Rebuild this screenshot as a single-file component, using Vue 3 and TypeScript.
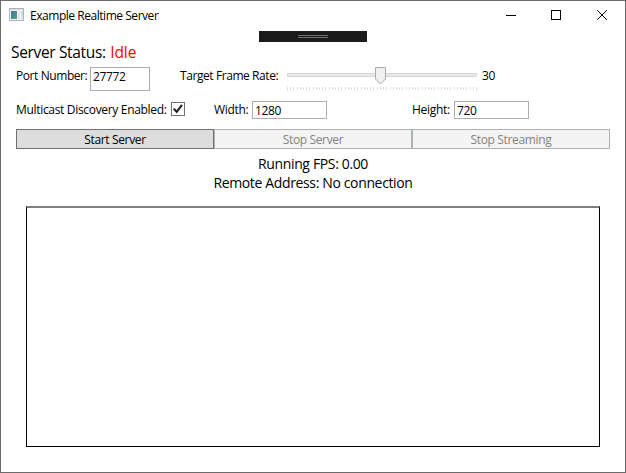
<script setup lang="ts">
import { ref } from 'vue'

const port = ref('27772')
const frameRate = ref(30)
const multicast = ref(true)
const width = ref('1280')
const height = ref('720')
const tickXs = Array.from({ length: 60 }, (_, i) => Math.round((i * 189) / 59))
</script>

<template>
  <div class="window">
    <header class="titlebar">
      <svg class="app-icon" width="16" height="14" viewBox="0 0 16 14" shape-rendering="crispEdges">
        <defs>
          <linearGradient id="pane" x1="0" y1="0" x2="1" y2="1">
            <stop offset="0" stop-color="#3b72a8" />
            <stop offset="1" stop-color="#50a878" />
          </linearGradient>
        </defs>
        <rect x="0.5" y="0.5" width="14" height="12" fill="#f3f4f5" stroke="#aeb2b9" />
        <rect x="1" y="1" width="13" height="1" fill="#d5d8dc" />
        <rect x="2" y="3" width="6" height="8" fill="url(#pane)" />
        <rect x="9" y="3" width="2" height="8" fill="#dfe3ee" />
        <rect x="12" y="3" width="2" height="4" fill="#c5dcd0" />
        <rect x="12" y="7" width="2" height="4" fill="#dde2e6" />
      </svg>
      <span class="title">Example Realtime Server</span>
      <div class="controls">
        <svg width="46" height="30" viewBox="0 0 46 30"><path d="M19 14.5h10" stroke="#000" /></svg>
        <svg width="46" height="30" viewBox="0 0 46 30"><rect x="18.5" y="9.5" width="9" height="9" fill="none" stroke="#000" /></svg>
        <svg width="46" height="30" viewBox="0 0 46 30"><path d="M18.2 9.2l9.6 9.6M27.8 9.2l-9.6 9.6" stroke="#000" /></svg>
      </div>
    </header>
    <div class="debug-bar"><i></i></div>

    <div class="status"><span>Server Status:</span><span class="idle">Idle</span></div>

    <div class="row first">
      <label class="port-label">Port Number:</label>
      <div class="box port">{{ port }}</div>
      <label class="rate-label">Target Frame Rate:</label>
      <svg class="slider" width="191" height="26" viewBox="0 0 191 26">
        <rect x="0.5" y="7.5" width="189" height="3" fill="#e7eaea" stroke="#d6d6d6" />
        <rect
          v-for="(x, i) in tickXs"
          :key="i"
          :x="x"
          y="21"
          width="1"
          :height="i === 0 || i === 59 ? 4 : 3"
          fill="#dedede"
        />
        <path d="M88.5 1.5h10v11.5l-5 5l-5 -5z" fill="#f0f0f0" stroke="#acacac" />
      </svg>
      <span class="rate">{{ frameRate }}</span>
    </div>

    <div class="row second">
      <div class="cell">
        <label class="multi-label">Multicast Discovery Enabled:</label>
        <svg class="check" width="14" height="14" viewBox="0 0 14 14">
          <rect x="0.5" y="0.5" width="13" height="13" fill="#fff" stroke="#707070" />
          <path v-if="multicast" d="M2.7 6.6l3 3.2L11 2.8" fill="none" stroke="#212121" stroke-width="2.1" />
        </svg>
      </div>
      <div class="cell">
        <label class="width-label">Width:</label>
        <div class="box dim">{{ width }}</div>
      </div>
      <div class="cell">
        <label class="height-label">Height:</label>
        <div class="box dim">{{ height }}</div>
      </div>
    </div>

    <div class="buttons">
      <button class="start"><span>Start Server</span></button>
      <button disabled><span>Stop Server</span></button>
      <button disabled class="stream"><span>Stop Streaming</span></button>
    </div>

    <div class="info fps"><span>Running FPS: 0.00</span></div>
    <div class="info remote"><span>Remote Address: No connection</span></div>

    <div class="preview"></div>
  </div>
</template>

<style>
body {
  margin: 0;
  overflow: hidden;
}
</style>

<style scoped>
.window {
  position: relative;
  box-sizing: border-box;
  width: 626px;
  height: 473px;
  border: 1px solid #6b6b6b;
  background: #fff;
  color: #000;
  font-family: "Open Sans", "Noto Sans", sans-serif;
  font-size: 12px;
  line-height: 16px;
  white-space: nowrap;
}
.titlebar {
  display: flex;
  align-items: center;
  height: 30px;
  padding-left: 8px;
}
.app-icon {
  margin-top: -2px;
}
.title {
  margin-left: 5px;
  letter-spacing: -0.46px;
}
.controls {
  display: flex;
  margin-left: auto;
}
.controls svg {
  display: block;
}
.debug-bar {
  position: absolute;
  top: 30px;
  left: 258px;
  width: 108px;
  height: 11px;
  display: flex;
  align-items: center;
  justify-content: center;
  background: #1b1b1b;
}
.debug-bar i {
  width: 30px;
  height: 1px;
  border: solid #6e6e6e;
  border-width: 1px 0;
}
.status {
  display: flex;
  height: 22px;
  margin-top: 10px;
  padding-left: 10px;
  font-size: 15.5px;
  line-height: 22px;
  letter-spacing: -0.34px;
}
.idle {
  margin-left: 4.5px;
  color: #f00;
  letter-spacing: -0.1px;
}
.row {
  display: flex;
  padding-left: 15px;
}
.first {
  height: 34px;
  padding-top: 3px;
}
label {
  flex: none;
  padding-top: 2px;
  letter-spacing: -0.42px;
}
.port-label {
  width: 74px;
}
.rate-label {
  width: 107px;
  margin-left: 30px;
}
.box {
  box-sizing: border-box;
  flex: none;
  border: 1px solid #abadb3;
  padding-left: 2px;
  letter-spacing: -0.35px;
}
.port {
  width: 60px;
  height: 24px;
  margin-top: 1px;
  padding-top: 1px;
}
.slider {
  flex: none;
}
.rate {
  margin-left: 4px;
  padding-top: 2px;
  letter-spacing: -0.35px;
}
.second {
  height: 28px;
}
.cell {
  display: flex;
  width: 198px;
}
.multi-label {
  width: 155px;
  letter-spacing: -0.32px;
}
.check {
  margin-top: 2px;
}
.width-label {
  width: 38px;
  letter-spacing: -0.3px;
}
.height-label {
  width: 42px;
  letter-spacing: -0.3px;
}
.dim {
  width: 75px;
  height: 18px;
  margin-top: 1px;
  line-height: 18px;
}
.buttons {
  display: flex;
  margin: 1px 15px 0;
}
button {
  box-sizing: border-box;
  width: 198px;
  height: 20px;
  padding: 1px 0 0;
  border: 1px solid #adb2b5;
  border-radius: 0;
  background: #f4f4f4;
  color: #838383;
  font: inherit;
  line-height: 17px;
  letter-spacing: -0.35px;
}
.start {
  border-color: #707070;
  background: #ddd;
  color: #000;
}
.info {
  height: 19px;
  text-align: center;
  font-size: 14px;
  line-height: 19px;
  letter-spacing: -0.36px;
}
.fps {
  margin-top: 5px;
}
.preview {
  box-sizing: border-box;
  width: 574px;
  height: 241px;
  margin: 14px 0 0 25px;
  border: 1px solid #000;
  border-top: 2px solid #808080;
}
</style>
